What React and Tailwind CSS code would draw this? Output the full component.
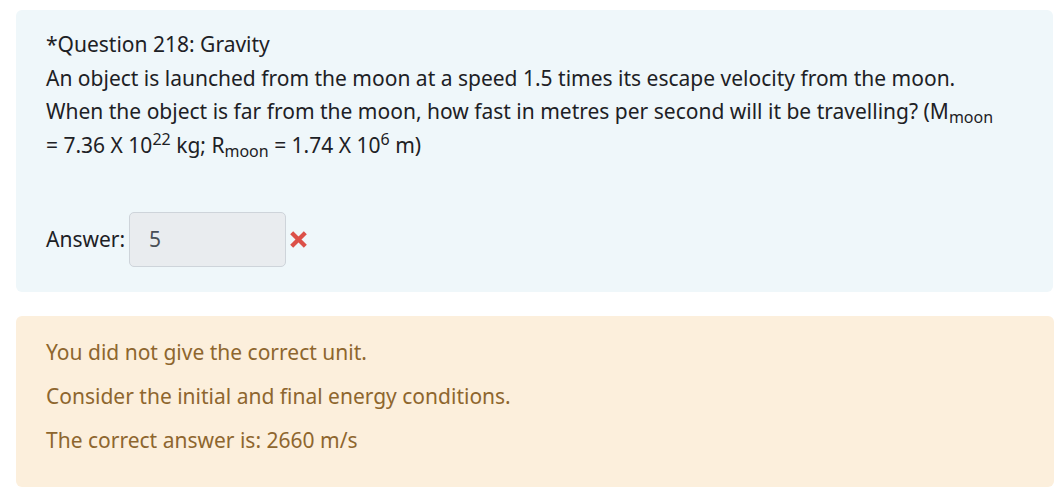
import React from "react";

function App() {
  return (
    <div className="min-h-screen bg-white font-['Noto_Sans','Open_Sans',sans-serif] text-[21px] text-[#1d2125]">
      <div className="pl-[16px] pr-[11px] pt-[10px]">
        <div className="bg-[#eff7fa] rounded-[6px] h-[282px] px-[30px] pt-[18px]">
          <div className="leading-[33.5px]">
            <div>*Question 218: Gravity</div>
            <div>
              An object is launched from the moon at a speed 1.5 times its escape velocity from the moon.
              <br />
              When the object is far from the moon, how fast in metres per second will it be travelling? (M
              <sub className="text-[16px] leading-none">moon</sub>
              <br />= 7.36 X 10<sup className="text-[16px] leading-none">22</sup> kg; R
              <sub className="text-[16px] leading-none">moon</sub> = 1.74 X 10
              <sup className="text-[16px] leading-none">6</sup> m)
            </div>
          </div>
          <div className="flex items-center mt-[50px]">
            <span className="mr-[4px]">Answer:</span>
            <div className="w-[157px] h-[55px] bg-[#e9ecef] border border-[#ced4da] rounded-[5px] flex items-center px-[19px] text-[#495057]">
              5
            </div>
            <svg width="17" height="17" viewBox="0 0 16 16" className="ml-[4px]">
              <path d="M3 3 L13 13 M13 3 L3 13" stroke="#dc5048" strokeWidth="4" strokeLinecap="square" />
            </svg>
          </div>
        </div>
      </div>
      <div className="pl-[16px] pr-[10px] pt-[24px]">
        <div className="bg-[#fcefdc] rounded-[6px] h-[171px] px-[30px] pt-[20px] text-[#8e662e] leading-[32px]">
          <p className="mb-[12px]">You did not give the correct unit.</p>
          <p className="mb-[12px]">Consider the initial and final energy conditions.</p>
          <p>The correct answer is: 2660 m/s</p>
        </div>
      </div>
    </div>
  );
}

export default App;
